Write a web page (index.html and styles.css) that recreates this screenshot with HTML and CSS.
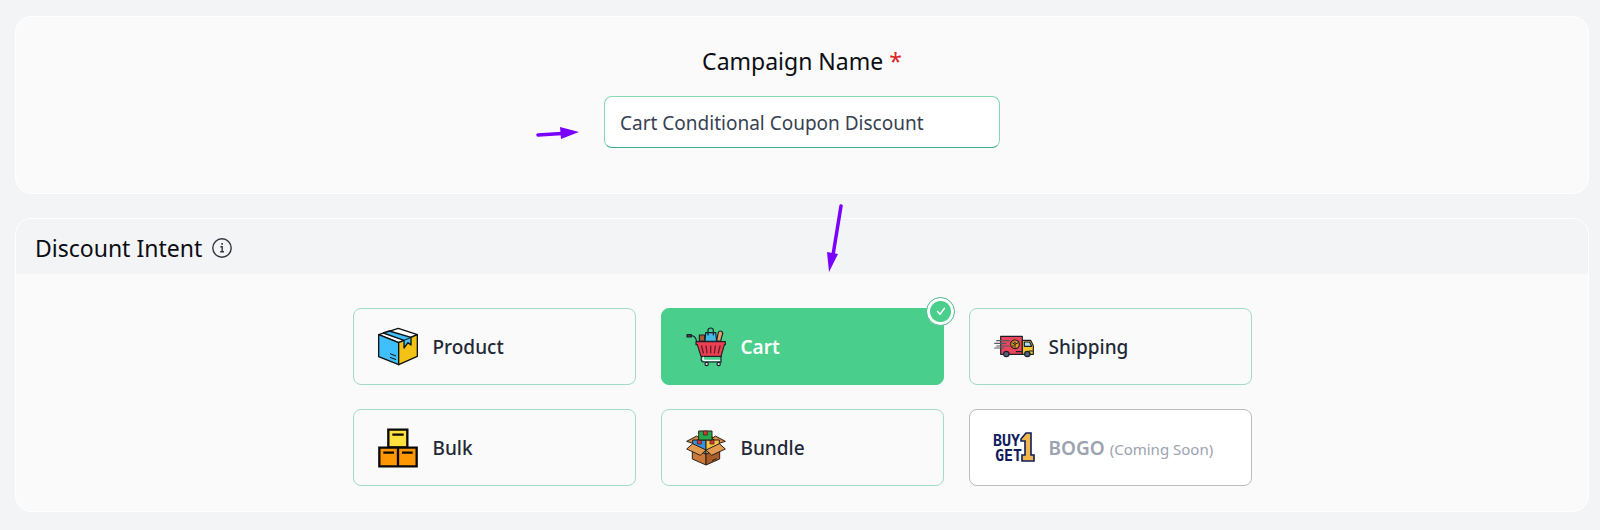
FILE: index.html
```html
<!DOCTYPE html>
<html lang="en">
<head>
<meta charset="utf-8">
<title>Campaign</title>
<link rel="stylesheet" href="styles.css">
</head>
<body>
<form class="page">
  <section class="panel name-panel">
    <label class="title" for="campaign">Campaign Name <span class="required">*</span></label>
    <input class="name-input" id="campaign" type="text" value="Cart Conditional Coupon Discount">
  </section>

  <section class="panel">
    <header class="panel-header">
      <h2 class="title">Discount Intent</h2>
      <svg class="info" viewBox="0 0 20 20" fill="none" stroke="#30343b" stroke-width="1.4"><circle cx="10" cy="10" r="9.2"/><path d="M8.4 8.7h1.8v5M8.2 13.8h3.8"/><path d="M9.3 5.9h1.6" stroke-width="1.6"/></svg>
    </header>
    <div class="options">
      <label class="option">
        <svg class="icon" viewBox="0 0 120 120" stroke="#111" stroke-width="4" stroke-linejoin="round">
          <path fill="#fff" d="M2 23 61 4l57 19-56 24z"/>
          <path fill="#3fbffb" d="M2 23l60 24v66L2 89z"/>
          <path fill="#f2c314" d="M118 23 62 47v66l56-25z"/>
          <path fill="#3fbffb" d="M16 18 34 12 99 31v23l-9-7-12 16V40z"/>
          <path fill="none" d="M78 40 99 31M36 80l18 7M36 91l18 7" stroke-width="3"/>
        </svg>
        <span class="name">Product</span>
        <input class="radio" type="radio" name="intent">
      </label>
      <label class="option selected">
        <svg class="icon" viewBox="0 0 120 120" stroke="#1d2128" stroke-width="3.5" stroke-linejoin="round" stroke-linecap="round">
          <path fill="#a65a35" d="M40 42V24h16v18z"/>
          <path fill="#e9a267" d="M92 42l5-26q5-7 11-2 4 4 0 12l-4 16z"/>
          <path fill="#43b9e6" d="M57 43l2-26h30l3 26z"/>
          <path fill="none" d="M66 24V10q0-7 8-7t8 7v14"/>
          <path fill="#444b5c" d="M3 23h13v7H3z"/>
          <path fill="none" d="M16 26c9 0 13 4 16 17"/>
          <path fill="#ee4052" d="M30 44h88v9h-3l-10 35H45L34 53h-4z"/>
          <path fill="none" stroke="#681c2b" stroke-width="4" d="M47 57l5 21M60 57l3 21M74 57v21M88 57l-3 21M102 57l-5 21"/>
          <path fill="none" d="M47 89q-6 16 9 16h48"/>
          <path fill="none" stroke="#fff" stroke-width="4" d="M52 91q-4 9 5 9h45"/>
          <path fill="none" d="M105 88v17"/>
          <circle fill="#eee" cx="62" cy="111" r="5"/><circle fill="#eee" cx="98" cy="111" r="5"/>
        </svg>
        <span class="name">Cart</span>
        <input class="radio" type="radio" name="intent" checked>
        <svg class="tick" viewBox="0 0 20 20" fill="none" stroke="#fff" stroke-width="1.5" stroke-linecap="round" stroke-linejoin="round"><path d="m6.500 10.500 2.500 2.700 4.500-6"/></svg>
      </label>
      <label class="option">
        <svg class="icon" viewBox="0 0 120 120" stroke="#1b2028" stroke-width="3.5" stroke-linejoin="round" stroke-linecap="round">
          <path fill="#f0445c" d="M20 28h65v54H20z"/>
          <path fill="#f7c52e" d="M85 40h25l8 16v26H85z"/>
          <path fill="#a9e0ef" d="M91 45h16l6 13H91z"/>
          <path stroke="#555b66" d="M8 41h38M2 49h34M8 57h38M2 63h28"/>
          <circle fill="#e99b24" cx="63" cy="52" r="13"/>
          <path fill="none" stroke-width="3" d="M56 48l7 4 8-4M63 52v9M57 55v4M60 45l7 4"/>
          <path fill="none" d="M67 74h15M106 72h10"/>
          <circle fill="#52657a" cx="37" cy="81" r="8"/><circle fill="#52657a" cx="100" cy="81" r="8"/>
        </svg>
        <span class="name">Shipping</span>
        <input class="radio" type="radio" name="intent">
      </label>
      <label class="option">
        <svg class="icon" viewBox="0 0 120 120" stroke="#080808" stroke-width="7">
          <path fill="#ffdf3e" d="M31 5h57v53H31z"/>
          <path fill="#ff9702" d="M4 59h56v56H4zM60 59h56v56H60z"/>
          <path d="M43 20h34M16 74h32M72 74h32"/>
        </svg>
        <span class="name">Bulk</span>
        <input class="radio" type="radio" name="intent">
      </label>
      <label class="option">
        <svg class="icon" viewBox="0 0 120 120" stroke="#2b201b" stroke-width="3" stroke-linejoin="round">
          <path fill="#a9632e" d="M20 35 60 20l40 15v25H20z"/>
          <path fill="#d88b43" d="M2 40 32 24l10 8-22 14zM118 40 88 24l-10 8 22 14z"/>
          <path fill="#3592df" d="M20 36h40v42L20 60z"/>
          <path fill="#f5c243" d="M60 36h40v24L60 78z"/>
          <path fill="#e23136" d="M34 36h12v12H34zM72 36h12v12H72z" stroke-width="2"/>
          <path fill="#24a94b" d="M38 9h40v27H38z"/>
          <path fill="#e23136" d="M52 9h12v12H52z" stroke-width="2"/>
          <path fill="#c9793a" d="M19 60l41 19v32L19 93z"/>
          <path fill="#a85c27" d="M101 60 60 79v32l41-18z"/>
          <path fill="#e29a50" d="M20 47 60 66 43 82 2 63z"/>
          <path fill="#e29a50" d="M100 47 60 66l17 16 41-19z"/>
          <path d="M78 98l14-6"/>
        </svg>
        <span class="name">Bundle</span>
        <input class="radio" type="radio" name="intent">
      </label>
      <label class="option disabled">
        <svg class="icon" viewBox="0 0 40 40" fill="#101c5c">
          <text class="deal" x="-1" y="18">BUY</text>
          <text class="deal" x="1" y="33">GET</text>
          <path d="M27 11l5-6h5v22h3v6H28v-6h3V13h-4z" fill="#f0b64b" stroke="#101c5c" stroke-width="1.6"/>
        </svg>
        <span class="name">BOGO <small class="soon">(Coming Soon)</small></span>
        <input class="radio" type="radio" name="intent" disabled>
      </label>
    </div>
  </section>

  <svg class="arrow arrow-name" viewBox="0 0 44 14" fill="#7a00ff"><path d="M2 9 26 7.500" stroke="#7a00ff" stroke-width="3.500" stroke-linecap="round"/><path d="M24 1l19 5-18 7z"/></svg>
  <svg class="arrow arrow-cart" viewBox="0 0 18 70" fill="#7a00ff"><path d="M15 3 7 52" stroke="#7a00ff" stroke-width="3.500" stroke-linecap="round"/><path d="M1 49l11 2-9 18z"/></svg>
</form>
</body>
</html>
```
FILE: styles.css
```css
* { box-sizing: border-box; }

body {
  margin: 0;
  background: #f3f4f6;
  color: #111827;
  font-family: "Segoe UI", "Noto Sans", sans-serif;
}

.page {
  position: relative;
  display: flex;
  flex-direction: column;
  gap: 24px;
  padding: 16px 11px 19px 15px;
}

.panel {
  background: #fafafa;
  border: 1px solid #fff;
  border-radius: 16px;
  overflow: hidden;
}

.name-panel {
  display: flex;
  flex-direction: column;
  align-items: center;
  gap: 17px;
  padding: 26px 24px 45px;
}

.title {
  margin: 0;
  font-size: 23px;
  font-weight: 400;
  line-height: 36px;
  color: #0b0d12;
}

.required { color: #dc2626; }

.name-input {
  width: 396px;
  max-width: 100%;
  height: 52px;
  padding: 2px 15px 0;
  background: #fff;
  border: 1px solid #86d9b0;
  border-bottom-color: #3dae85;
  border-radius: 8px;
  color: #374151;
  font: inherit;
  font-size: 19px;
}

.panel-header {
  display: flex;
  align-items: center;
  gap: 10px;
  height: 55px;
  padding: 3px 19px 0;
  background: #f3f4f6;
}

.info { width: 20px; height: 20px; }

.options {
  display: grid;
  grid-template-columns: repeat(3, 1fr);
  gap: 24px 25px;
  max-width: 899px;
  margin: 0 auto;
  padding: 34px 0 25px;
}

.option {
  position: relative;
  display: flex;
  align-items: center;
  gap: 15px;
  height: 77px;
  padding: 0 24px;
  border: 1px solid #a3dcc5;
  border-radius: 8px;
  font-size: 19px;
  font-weight: 500;
  color: #1f2937;
}

.selected {
  background: #49ce8b;
  border-color: #49ce8b;
  color: #fff;
  font-weight: 600;
}

.disabled {
  background: #fff;
  border-color: #b9bcc1;
  color: #9ca3af;
  font-weight: 600;
}

.soon { font-size: 15px; font-weight: 400; }

.icon { flex: none; width: 40px; height: 40px; overflow: visible; }

.deal { font: bold 15px "DejaVu Sans Mono", monospace; }

.radio {
  position: absolute;
  top: -12px;
  right: -12px;
  width: 29px;
  height: 29px;
  margin: 0;
  appearance: none;
  border-radius: 50%;
}

.radio:checked {
  background: #fff radial-gradient(circle, #49ce8b 10px, #fff 11px);
  border: 1px solid #49b88b;
}

.tick {
  position: absolute;
  top: -8px;
  right: -8px;
  width: 20px;
  height: 20px;
}

.arrow { position: absolute; pointer-events: none; }
.arrow-name { left: 536px; top: 126px; width: 44px; height: 14px; }
.arrow-cart { left: 826px; top: 203px; width: 18px; height: 70px; }
```
